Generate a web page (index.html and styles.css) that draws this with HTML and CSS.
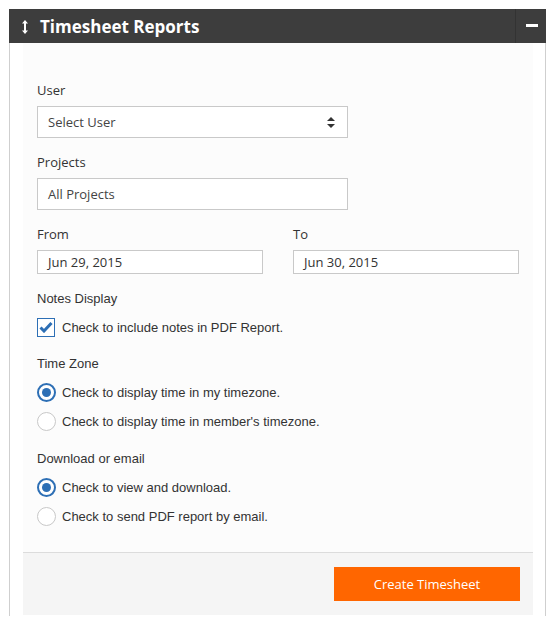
FILE: index.html
```html
<!DOCTYPE html>
<html>
<head>
<meta charset="utf-8">
<link rel="stylesheet" href="styles.css">
</head>
<body>
<div class="panel">
  <div class="panel-head">
    <svg class="sort-icon" width="6" height="14" viewBox="0 0 6 14"><path d="M3 0 L6 3.5 H4 V10.5 H6 L3 14 L0 10.5 H2 V3.5 H0 Z" fill="#fff"/></svg>
    <span class="title">Timesheet Reports</span>
    <div class="collapse"><span class="minus"></span></div>
  </div>
  <div class="panel-body">
    <div class="form">
      <div class="label">User</div>
      <div class="field select">
        <span>Select User</span>
        <svg width="8" height="11" viewBox="0 0 8 11"><path d="M4 0 L8 4 H0 Z M0 7 H8 L4 11 Z" fill="#333"/></svg>
      </div>
      <div class="label">Projects</div>
      <div class="field">All Projects</div>
      <div class="dates">
        <div class="col">
          <div class="label">From</div>
          <div class="field date">Jun 29, 2015</div>
        </div>
        <div class="col">
          <div class="label">To</div>
          <div class="field date">Jun 30, 2015</div>
        </div>
      </div>
      <div class="label arial notes">Notes Display</div>
      <div class="opt check-row">
        <span class="checkbox"><svg width="14" height="12" viewBox="0 0 14 12"><path d="M1.5 6.5 L5 10 L12.5 2" stroke="#2d6fb5" stroke-width="3" fill="none"/></svg></span>
        <span>Check to include notes in PDF Report.</span>
      </div>
      <div class="label arial section">Time Zone</div>
      <div class="opt radio-row first"><span class="radio on"></span><span>Check to display time in my timezone.</span></div>
      <div class="opt radio-row"><span class="radio"></span><span>Check to display time in member's timezone.</span></div>
      <div class="label arial section2">Download or email</div>
      <div class="opt radio-row first"><span class="radio on"></span><span>Check to view and download.</span></div>
      <div class="opt radio-row"><span class="radio"></span><span>Check to send PDF report by email.</span></div>
    </div>
    <div class="footer">
      <button class="btn">Create Timesheet</button>
    </div>
  </div>
</div>
</body>
</html>
```

FILE: styles.css
```css
html, body {
  margin: 0;
  padding: 0;
  background: #fff;
}
body {
  font-family: "Open Sans", sans-serif;
  color: #333;
}
.panel {
  margin: 9px 0 0 9px;
  width: 537px;
  box-sizing: border-box;
}
.panel-head {
  height: 34px;
  background: #3d3d3d;
  display: flex;
  align-items: center;
  color: #fff;
}
.sort-icon {
  margin-left: 13px;
  margin-top: 1px;
}
.title {
  margin-left: 12px;
  font-weight: 700;
  font-size: 17px;
  letter-spacing: 0;
  flex: 1;
}
.collapse {
  width: 30px;
  height: 34px;
  border-left: 1px solid #333;
  display: flex;
  align-items: center;
  justify-content: center;
}
.minus {
  display: block;
  width: 12px;
  height: 3px;
  background: #fff;
  margin-left: 2px;
  margin-top: -1px;
}
.panel-body {
  border-left: 1px solid #cfcfcf;
  border-right: 1px solid #cfcfcf;
  padding: 0 12px 9px 13px;
  height: 573px;
  box-sizing: border-box;
}
.form {
  background: #fcfcfc;
  padding: 38px 14px 26px 14px;
}
.label {
  font-size: 13px;
  line-height: 18px;
  height: 18px;
  margin-bottom: 7px;
}
.field {
  box-sizing: border-box;
  width: 311px;
  height: 32px;
  border: 1px solid #c9c9c9;
  background: #fff;
  font-size: 13px;
  color: #444;
  padding: 0 10px;
  display: flex;
  align-items: center;
  margin-bottom: 15px;
}
.select {
  justify-content: space-between;
  padding-right: 12px;
}
.dates {
  display: flex;
  gap: 30px;
}
.field.date {
  width: 226px;
  height: 24px;
  margin-bottom: 16px;
  color: #333;
}
.arial, .opt {
  font-family: "Liberation Sans", Arial, sans-serif;
  font-size: 13px;
}
.label.notes {
  margin-bottom: 10px;
}
.opt {
  display: flex;
  align-items: center;
  gap: 7px;
  color: #333;
}
.check-row {
  height: 18px;
}
.checkbox {
  box-sizing: border-box;
  width: 18px;
  height: 19px;
  border: 1px solid #2d6fb5;
  background: #fff;
  display: flex;
  align-items: center;
  justify-content: center;
}
.label.section {
  margin-top: 19px;
  margin-bottom: 10px;
}
.label.section2 {
  margin-top: 19px;
  margin-bottom: 10px;
}
.radio-row {
  height: 19px;
  gap: 6px;
}
.radio-row + .radio-row {
  margin-top: 10px;
}
.radio {
  box-sizing: border-box;
  width: 19px;
  height: 19px;
  border-radius: 50%;
  border: 1px solid #c8c8c8;
  background: #fff;
  display: flex;
  align-items: center;
  justify-content: center;
}
.radio.on {
  border: 2px solid #2d6fb5;
}
.radio.on::after {
  content: "";
  width: 9px;
  height: 9px;
  border-radius: 50%;
  background: #2d6fb5;
}
.footer {
  border-top: 1px solid #dcdcdc;
  background: #f5f5f5;
  height: 63px;
  box-sizing: border-box;
  padding: 14px 13px 0 0;
  display: flex;
  justify-content: flex-end;
  align-items: flex-start;
}
.btn {
  width: 186px;
  height: 34px;
  border: none;
  background: #ff6600;
  color: #fff;
  font-family: "Open Sans", sans-serif;
  font-size: 13px;
  padding: 0;
}
```
